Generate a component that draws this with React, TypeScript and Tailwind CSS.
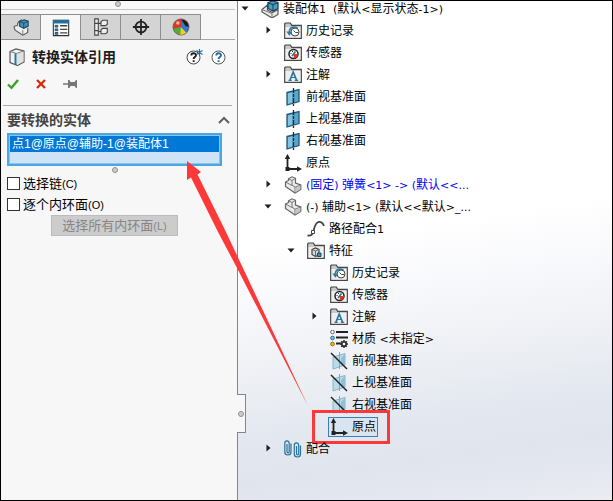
import { useState } from 'react';
import type { ReactNode } from 'react';

type IconName =
  | 'assembly' | 'history' | 'sensor' | 'note' | 'plane' | 'hiddenPlane'
  | 'origin' | 'part' | 'path' | 'feature' | 'material' | 'mates';

type TreeNode = {
  level: number;
  icon: IconName;
  text: string;
  arrow?: 'open' | 'closed';
  blue?: boolean;
  selected?: boolean;
};

const nodes: TreeNode[] = [
  { level: 0, icon: 'assembly', text: '装配体1  (默认<显示状态-1>)', arrow: 'open' },
  { level: 1, icon: 'history', text: '历史记录', arrow: 'closed' },
  { level: 1, icon: 'sensor', text: '传感器' },
  { level: 1, icon: 'note', text: '注解', arrow: 'closed' },
  { level: 1, icon: 'plane', text: '前视基准面' },
  { level: 1, icon: 'plane', text: '上视基准面' },
  { level: 1, icon: 'plane', text: '右视基准面' },
  { level: 1, icon: 'origin', text: '原点' },
  { level: 1, icon: 'part', text: '(固定) 弹簧<1> -> (默认<<...', arrow: 'closed', blue: true },
  { level: 1, icon: 'part', text: '(-) 辅助<1> (默认<<默认>_...', arrow: 'open' },
  { level: 2, icon: 'path', text: '路径配合1' },
  { level: 2, icon: 'feature', text: '特征', arrow: 'open' },
  { level: 3, icon: 'history', text: '历史记录' },
  { level: 3, icon: 'sensor', text: '传感器' },
  { level: 3, icon: 'note', text: '注解', arrow: 'closed' },
  { level: 3, icon: 'material', text: '材质 <未指定>' },
  { level: 3, icon: 'hiddenPlane', text: '前视基准面' },
  { level: 3, icon: 'hiddenPlane', text: '上视基准面' },
  { level: 3, icon: 'hiddenPlane', text: '右视基准面' },
  { level: 3, icon: 'origin', text: '原点', selected: true },
  { level: 1, icon: 'mates', text: '配合', arrow: 'closed' },
];

const indents = ['pl-0', 'pl-[23px]', 'pl-[46px]', 'pl-[69px]'];

function Folder({ children }: { children: ReactNode }) {
  return (
    <>
      <path d="M.7 16.3V1.7L1.5 1h4.800l1.500 2.300h9.500v13z" fill="#c9c9c9" stroke="#454545" strokeWidth="1.200" />
      <path d="M1.500 5h15v10.600h-15z" fill="#eeeeee" />
      {children}
    </>
  );
}

const treeIcons: Record<IconName, ReactNode> = {
  assembly: (
    <>
      <path d="M1 9.500 6.500 5v5l5 2.500 5.500-3v5L11 18 1 12z" fill="#e9e9e9" stroke="#555" strokeWidth="1.200" />
      <path d="m1 9.500 10 4V18" fill="none" stroke="#777" />
      <path d="m7 2.500 4.500-1.500L17 2.500v6L12 11 7 8.500z" fill="#4f9dc4" stroke="#153f59" strokeWidth="1.200" />
      <path d="m7 3 5 1.500L17 3M12 4.500V11" fill="none" stroke="#123a52" />
    </>
  ),
  history: (
    <Folder>
      <circle cx="11" cy="10" r="4" fill="#fff" stroke="#454545" />
      <path d="M13.500 6C9 4 5.600 5.500 5.300 10" fill="none" stroke="#2b7ba6" strokeWidth="1.600" />
      <path d="m2.300 9.500 6 .3-3 4z" fill="#2b7ba6" />
      <path d="m9.500 8.500 2 2h2.500" fill="none" stroke="#444" />
    </Folder>
  ),
  sensor: (
    <Folder>
      <circle cx="9.500" cy="10" r="4.500" fill="#fff" stroke="#222" strokeWidth="1.500" />
      <path d="M9.500 10h4.500a4.500 4.500 0 0 1-4 4.500z" fill="#e03518" />
      <path d="m8 12 3.500-4.500" stroke="#2373a0" strokeWidth="1.600" />
      <path d="M6.500 9.500h1M8 7.500h1" stroke="#222" />
    </Folder>
  ),
  note: (
    <Folder>
      <path d="m6 14 3.200-8 3.300 8" fill="none" stroke="#2b75a0" strokeWidth="1.700" />
      <path d="M7 11.500h4.500M4.500 14.300h3.200M10.800 14.300h3.400" fill="none" stroke="#2b75a0" strokeWidth="1.200" />
    </Folder>
  ),
  plane: (
    <>
      <path d="m3 4.500 12-3v12l-12 3.500z" fill="#5aa5c9" stroke="#1c5b7e" strokeWidth="1.300" />
      <path d="m4 5.500 4-1v10l-4 1.200z" fill="#85c3df" />
      <path d="M9.500 0v18" stroke="#1b2c38" strokeWidth="1.300" strokeDasharray="5 1 3 1" />
    </>
  ),
  hiddenPlane: (
    <>
      <path d="m3 5 12-3.500V13L3 17z" fill="#b9dbea" stroke="#8cb4c8" />
      <path d="M9.500 0v17" stroke="#8aa6b5" />
      <path d="M11 6l4-4v10.500l-4 1z" fill="#91bfd5" />
      <path d="m1 1 16 16" stroke="#1e1e1e" strokeWidth="1.500" />
    </>
  ),
  origin: (
    <>
      <path d="M3.500 4v11H15" fill="none" stroke="#222" strokeWidth="1.800" />
      <path d="m3.500 0 2.700 5H.8zM18 15l-5 2.700v-5.400z" fill="#222" />
      <path d="M1.500 13h4v4h-4z" fill="#222" />
    </>
  ),
  part: (
    <>
      <path d="m1.500 6 3-1.500V2.800L8 .8l3.500 1.500v4.800L16.800 9v4.500L11 17 1.500 10.500z" fill="#eaeaea" stroke="#666" strokeWidth="1.200" />
      <path d="M4.500 2.800 8 4.500l3.500-2.200M8 4.500V9l3 2.200L16.800 9M11 11v6M1.500 6 8 9.500" fill="none" stroke="#777" />
      <path d="m11.500 11.500 4.800-2v3.700l-4.800 3z" fill="#c4c4c4" />
    </>
  ),
  path: (
    <>
      <path d="M.5 15.500c4 .5 5-1 6-4.500S8 3 11.500 2c3-.5 4.500 1.500 5.500 4" fill="none" stroke="#444" strokeWidth="1.800" />
      <path d="M4.500 10.500h3v3h-3z" fill="#fff" stroke="#444" />
    </>
  ),
  feature: (
    <Folder>
      <path d="M5 7.500 8.500 6 12 7.500v5l-3.500 2-3.500-2z" fill="#ddd" stroke="#444" strokeWidth="1.200" />
      <path d="M5 7.500 8.500 9 12 7.500M8.500 9v5.500" fill="none" stroke="#666" />
      <path d="M10.500 11h3.500v3.500h-3.500z" fill="#3d93bd" stroke="#174c69" />
    </Folder>
  ),
  material: (
    <>
      <path d="M6 2h12M6 7.500h12M6 13.500h5" stroke="#222" strokeWidth="1.800" />
      <circle cx="2.500" cy="2" r="1.800" fill="#fff" stroke="#666" />
      <circle cx="2.500" cy="8" r="1.800" fill="#7cc5e8" stroke="#2b6c8d" />
      <circle cx="2.500" cy="14" r="1.800" fill="#f6c414" stroke="#856a14" />
      <circle cx="14" cy="14" r="2.200" fill="#fff" stroke="#333" strokeWidth="1.800" />
      <path d="M14 10v1.500M14 16.500V18M10 14h1.500M16.500 14H18M11.200 11.200l1 1M15.800 15.800l1 1M16.800 11.200l-1 1M12.200 15.800l-1 1" stroke="#333" strokeWidth="1.500" />
    </>
  ),
  mates: (
    <>
      <path d="M3 4v7.500c0 1.800 2.200 1.800 2.200 0V3.500c0-3.500-4.400-3.500-4.400 0V12c0 4 6.200 4 6.200 0V3.500" fill="none" stroke="#28739a" strokeWidth="1.200" />
      <path d="M12.500 6v7.500c0 1.800 2.200 1.800 2.200 0V5.500c0-3.500-4.400-3.500-4.400 0V14c0 4 6.200 4 6.200 0V5.500" fill="none" stroke="#28739a" strokeWidth="1.200" />
    </>
  ),
};

// Latin runs are set in a smaller, wider face than the Chinese ones
function MixedText({ text }: { text: string }) {
  return (
    <>
      {text.split(/([\u4e00-\u9fff]+)/).map((run, i) =>
        i % 2 ? run : <span key={i} className="font-['DejaVu_Sans',sans-serif] text-[11px]">{run}</span>
      )}
    </>
  );
}

function Arrow({ state }: { state?: 'open' | 'closed' }) {
  if (!state) return <span className="w-3 shrink-0" />;
  return (
    <button className="w-3 h-3 shrink-0" aria-label={state === 'open' ? '折叠' : '展开'}>
      <svg viewBox="0 0 12 12" className="w-3 h-3">
        <path d={state === 'open' ? 'M2.500 3.500h7l-3.500 4z' : 'M4.500 1.500v7l4-3.500z'} fill="#1f1f1f" />
      </svg>
    </button>
  );
}

function TreeRow({ node }: { node: TreeNode }) {
  return (
    <li
      role="treeitem"
      aria-level={node.level + 1}
      aria-selected={!!node.selected}
      className={`flex h-[22px] items-center whitespace-pre ${indents[node.level]} ${node.blue ? 'text-[#0000f0]' : 'text-black'}`}
    >
      <Arrow state={node.arrow} />
      <div className="relative ml-2 flex h-5 items-center px-0.5">
        {node.selected && <span className="absolute inset-0 border border-[#3c7fb1] bg-[#d9e4f1]" />}
        <svg viewBox="0 0 18 18" className="relative mr-1 h-[18px] w-[18px]">{treeIcons[node.icon]}</svg>
        <span className="relative"><MixedText text={node.text} /></span>
        {node.selected && <span className="absolute -left-4 -right-3 -inset-y-[7px] border-3 border-[#fd3838]" />}
      </div>
    </li>
  );
}

const tabs = [
  {
    name: '特征树',
    icon: (
      <>
        <path d="m2 9.500 4-1.500c0-3 2-5 5-6M2 9.500l1.500 4L12 19l5.500-3v-5" fill="#eee" stroke="#555" strokeWidth="1.200" />
        <path d="m8.500 4 5-2 4.500 1.500V9l-5 2.500L8.500 9z" fill="#468eb5" stroke="#174965" strokeWidth="1.200" />
        <path d="m8.500 4 4.700 1.800L18 3.500M13 6v5.500" fill="none" stroke="#174965" />
        <path d="M12 13.500V19" stroke="#777" />
      </>
    ),
  },
  {
    name: '属性',
    icon: (
      <>
        <path d="M1.500 1.500h17v17h-17z" fill="#fff" stroke="#333" strokeWidth="1.200" />
        <path d="M1 1h18v4H1z" fill="#236f98" />
        <path d="M3.500 7h3v2h-3zM3.500 11h3v2h-3zM3.500 15h3v2h-3z" fill="#3f91bb" stroke="#174c69" />
        <path d="M9 7.500h8M9 11.500h8M9 15.500h8" stroke="#444" strokeWidth="1.400" />
      </>
    ),
  },
  {
    name: '配置',
    icon: (
      <g fill="#eee" stroke="#444" strokeWidth="1.200">
        <path d="M3 1h4v18H3zM3 6h4M3 14h4" />
        <path d="M7 6h3M7 15h3" />
        <path d="m10 4 2-1.500h5V7l-2 1.500h-5zM10 13l2-1.500h5V16l-2 1.500h-5z" />
      </g>
    ),
  },
  {
    name: '尺寸',
    icon: (
      <g fill="none" stroke="#222" strokeWidth="2">
        <circle cx="10" cy="10" r="6" />
        <path d="M10 1v18M1 10h18" />
      </g>
    ),
  },
  {
    name: '外观',
    icon: (
      <>
        <circle cx="10" cy="10" r="9" fill="#2871c8" />
        <path d="M10 10 1.500 12A9 9 0 0 1 11 1z" fill="#dc3524" />
        <path d="m10 10-8.500 2A9 9 0 0 0 9 19z" fill="#53aa36" />
        <path d="m10 10-1 9a9 9 0 0 0 7-3z" fill="#f5cd1e" />
        <path d="M10 10 11 1l8 9-3 6z" fill="#2f79cf" />
        <path d="M10 1c4 0 9 4 9 9l-4-1z" fill="#2a1614" />
        <circle cx="6.500" cy="5.500" r="2" fill="#fff" opacity=".6" />
        <circle cx="10" cy="10" r="9" fill="none" stroke="#7c6550" strokeWidth=".8" />
      </>
    ),
  },
];

function Grip() {
  return <span className="block h-1.5 w-1.5 rounded-full border border-[#919191] bg-[#cdcdcd]" />;
}

function PropertyPanel() {
  const [activeTab, setActiveTab] = useState(1);

  return (
    <aside className="w-[237px] shrink-0 border-r border-[#858585] bg-[#f7f7f7]">
      <div className="mr-0.5 flex h-[9px] justify-center border-b border-[#c4c4c4]">
        <Grip />
      </div>

      <div className="mr-0.5 mt-1 flex" role="tablist">
        {tabs.map((tab, i) => (
          <button
            key={tab.name}
            role="tab"
            aria-label={tab.name}
            aria-selected={i === activeTab}
            onClick={() => setActiveTab(i)}
            className={`flex h-[26px] w-10 items-center justify-center border-r border-t border-[#8e8e8e] ${i === activeTab ? 'bg-[#f7f7f7]' : 'border-b bg-[#d4d4d4]'}`}
          >
            <svg viewBox="0 0 20 20" className="h-[18px] w-[18px]">{tab.icon}</svg>
          </button>
        ))}
        <span className="flex-1 border-b border-[#a8a8a8]" />
      </div>

      <div className="flex h-[34px] items-center pl-2 pr-[11px]">
        <svg viewBox="0 0 16 18" className="h-[18px] w-4">
          <path d="m1 3.500 6-2.500 8 2v11l-6.500 3.500L1 14.500z" fill="#f2f2f2" stroke="#555" strokeWidth="1.200" />
          <path d="m1 3.500 6.500 2L15 3" fill="none" stroke="#777" />
          <path d="M8 6v11l6.500-3.500v-10z" fill="#e0e0e0" />
          <path d="M6.500 5.500V17" stroke="#2176a5" strokeWidth="2" />
        </svg>
        <h1 className="ml-[7px] flex-1 text-sm font-bold text-[#1c1c1c]">转换实体引用</h1>
        <button aria-label="新增功能" className="mr-2">
          <svg viewBox="0 0 17 16" className="h-4 w-[17px]">
            <circle cx="7.500" cy="8.500" r="6.500" fill="#fff" stroke="#444" />
            <path d="M5.300 6.500c0-3 4.700-3 4.700-.2 0 1.700-2.400 1.800-2.400 3.700M7.600 11.300v1.800" fill="none" stroke="#222" strokeWidth="1.900" />
            <path d="M13.500 0v7M10.500 1.500l6 4M16.500 1.500l-6 4" stroke="#1e719f" strokeWidth="1.100" />
          </svg>
        </button>
        <button aria-label="帮助">
          <svg viewBox="0 0 15 16" className="h-4 w-[15px]">
            <circle cx="7.500" cy="8.500" r="6.500" fill="#fff" stroke="#555" />
            <path d="M5.300 6.500c0-3 4.700-3 4.700-.2 0 1.700-2.400 1.800-2.400 3.700M7.600 11.300v1.800" fill="none" stroke="#1e719f" strokeWidth="1.900" />
          </svg>
        </button>
      </div>

      <div className="flex h-5 items-center gap-4 pl-1.5">
        <button aria-label="确定">
          <svg viewBox="0 0 12 12" className="h-3 w-3">
            <path d="m1 6.500 3.500 3.300L11 2" fill="none" stroke="#3aa022" strokeWidth="2.400" />
          </svg>
        </button>
        <button aria-label="取消">
          <svg viewBox="0 0 12 12" className="h-3 w-3">
            <path d="m2 2 8 8M10 2l-8 8" fill="none" stroke="#d62b0b" strokeWidth="2.300" />
          </svg>
        </button>
        <button aria-label="保持可见">
          <svg viewBox="0 0 14 12" className="h-3 w-3.5">
            <path d="M0 6h6" stroke="#777" strokeWidth="1.500" />
            <path d="M5 2h1.500l1 2h4L13 2h1v8h-1l-1.500-2h-4l-1 2H5z" fill="#777" />
          </svg>
        </button>
      </div>

      <section className="ml-0.5 mr-[5px] mt-[11px] border-t border-[#a9a9a9] pl-1 pr-2.5">
        <header className="flex h-[27px] items-center justify-between">
          <h2 className="text-sm font-bold text-[#434343]">要转换的实体</h2>
          <button aria-label="折叠" className="-mr-2">
            <svg viewBox="0 0 12 8" className="h-2 w-3">
              <path d="m1 7 5-5 5 5" fill="none" stroke="#606060" strokeWidth="2" />
            </svg>
          </button>
        </header>
        <ul role="listbox" aria-label="要转换的实体" className="h-[33px] border-2 border-[#4ba7df] bg-[#cfe3f8] ring-1 ring-inset ring-[#8dc5ea] p-px">
          <li role="option" aria-selected="true" className="h-4 bg-[#0078d7] pl-0.5 text-xs leading-4 text-white">
            点1@原点@辅助-1@装配体1
          </li>
        </ul>
        <div className="flex h-[7px] justify-center pt-px">
          <Grip />
        </div>
        <label className="flex h-[21px] items-center gap-[3px] text-[13px] text-black">
          <input type="checkbox" className="h-[13px] w-[13px] appearance-none border border-[#333] bg-white checked:bg-[#0078d7]" />
          <span>选择链<span className="text-[11px]">(C)</span></span>
        </label>
        <label className="flex h-[21px] items-center gap-[3px] text-[13px] text-black">
          <input type="checkbox" className="h-[13px] w-[13px] appearance-none border border-[#333] bg-white checked:bg-[#0078d7]" />
          <span>逐个内环面<span className="text-[11px]">(O)</span></span>
        </label>
        <button disabled className="mx-auto block h-[21px] w-[127px] border border-[#bcbcbc] bg-[#cccccc] text-[13px] leading-[19px] text-[#868686]">
          选择所有内环面<span className="text-[11px]">(L)</span>
        </button>
      </section>
    </aside>
  );
}

export default function App() {
  return (
    <div className="relative flex h-screen overflow-hidden border border-black bg-white font-['Liberation_Sans','Noto_Sans_CJK_SC',sans-serif]">
      <PropertyPanel />

      <main className="relative min-w-0 flex-1 bg-[linear-gradient(172deg,#ffffff_0%,#ffffff_45%,#f5f6fa_60%,#e9ecf1_74%,#e4e8f1_79%,#e0e4ed_88%,#e6e9f1_96%,#ececf2_100%)]">
        <ul role="tree" className="-mt-[3px] pl-px text-xs">
          {nodes.map((node, i) => (
            <TreeRow key={i} node={node} />
          ))}
        </ul>
        <div className="absolute -left-px top-[393px] flex h-[39px] w-[9px] items-center justify-center border-y border-r border-[#858585] bg-[#f7f7f7]">
          <Grip />
        </div>
      </main>

      <svg viewBox="0 0 130 250" className="pointer-events-none absolute left-[183px] top-[159px] h-[250px] w-[130px]" aria-hidden="true">
        <path d="M3 1 17 12l-3.500 2.500L41 70 58 106l66 140L52 106 33 70 7 17.500 3 20z" fill="#fd3838" />
      </svg>
    </div>
  );
}
